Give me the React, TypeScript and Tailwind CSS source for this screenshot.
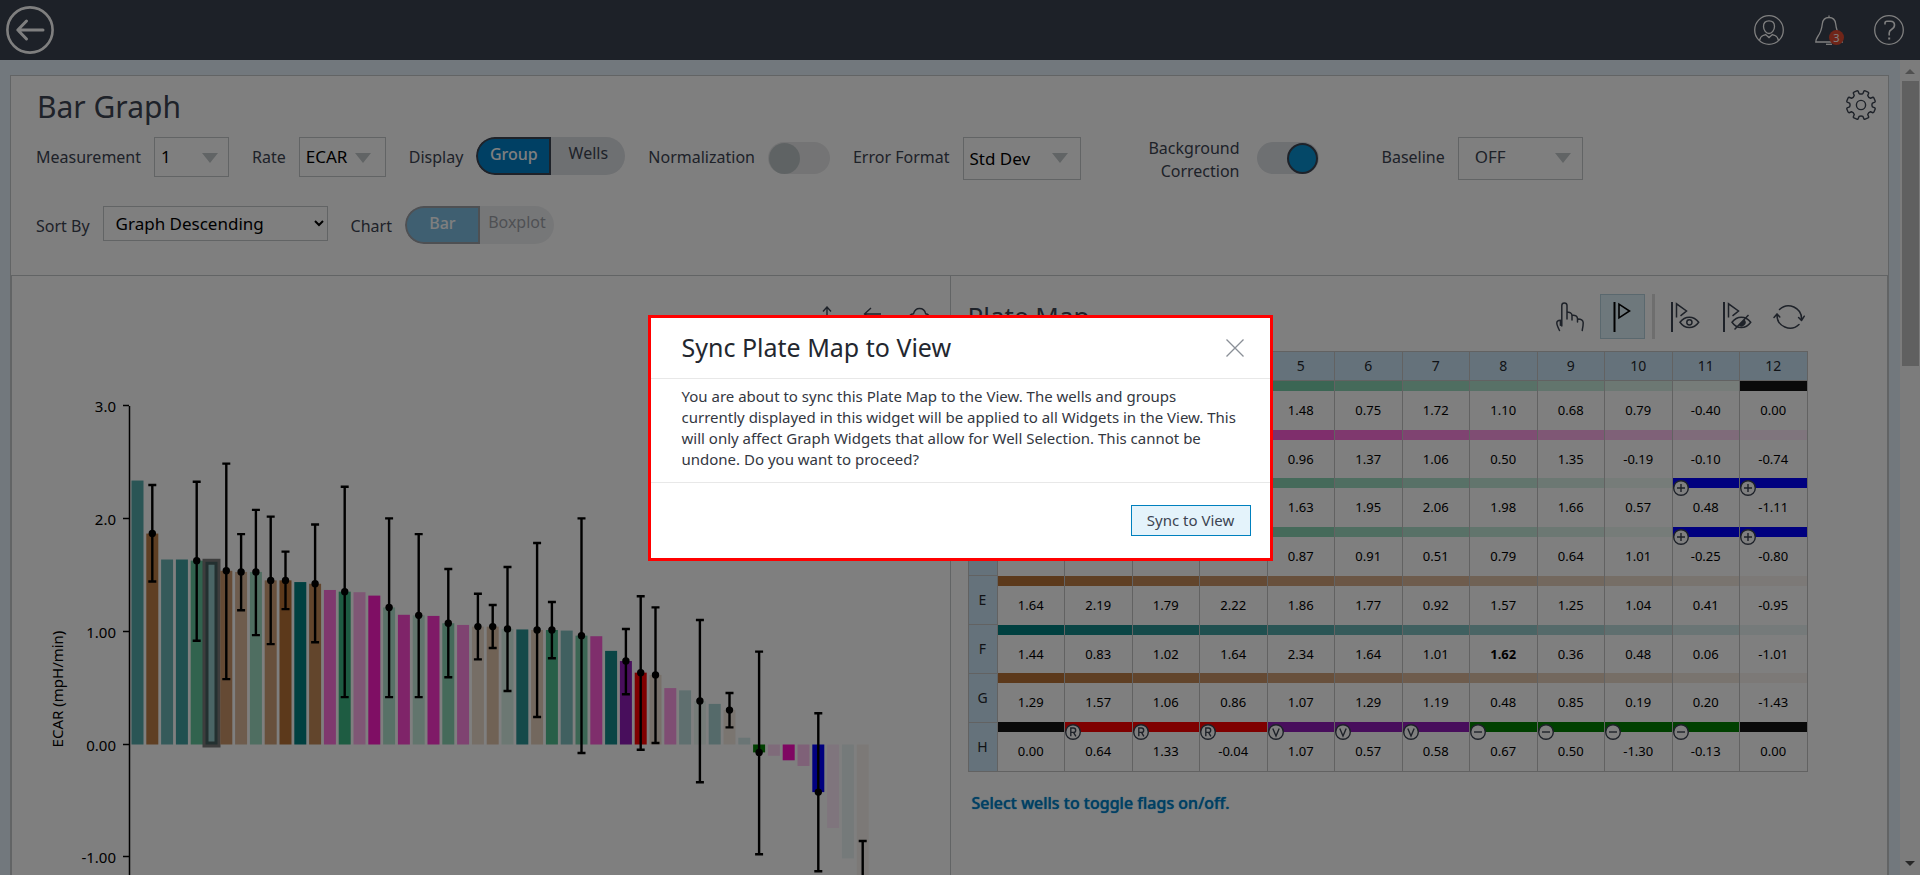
import React from "react";

type Rgb = [number, number, number];

const FAMILY: Record<string, Rgb> = {
  green: [60, 184, 132],
  magenta: [254, 12, 196],
  brown: [184, 114, 54],
  teal: [0, 128, 128],
  red: [255, 0, 0],
  purple: [144, 28, 184],
  forest: [0, 128, 0],
  blue: [0, 0, 255],
  black: [20, 20, 20],
};

const shade = (name: string, alpha: number) => {
  const [r, g, b] = FAMILY[name];
  const mix = (c: number) => Math.round(c * alpha + 255 * (1 - alpha));
  return `rgb(${mix(r)}, ${mix(g)}, ${mix(b)})`;
};

/* ---------- Icons ---------- */

const BackIcon = () => (
  <svg width="50" height="50" viewBox="0 0 50 50" fill="none" stroke="#fff" strokeWidth="2.6" strokeLinecap="round" strokeLinejoin="round" aria-hidden="true">
    <circle cx="25" cy="25" r="22.6" />
    <path d="M38 25H13M21.500 16L12.800 25l8.700 9" strokeWidth="3" />
  </svg>
);

const UserIcon = () => (
  <svg width="30" height="30" viewBox="0 0 30 30" fill="none" stroke="#fff" strokeWidth="1.3" aria-hidden="true">
    <circle cx="15" cy="15" r="14.3" />
    <path d="M15 5.800c3.400 0 5.500 2.400 5.500 5.700 0 3.500-2.700 7-5.500 7s-5.500-3.500-5.500-7c0-3.300 2.100-5.700 5.500-5.700z" />
    <path d="M5.500 25.500c.6-2.600 1.600-4.300 3.500-5 1.100-.4 2-.5 2.600-.9L15 22.600l3.400-3c.6.4 1.500.5 2.600.9 1.900.7 2.900 2.400 3.500 5" />
  </svg>
);

const BellIcon = () => (
  <svg width="30" height="30" viewBox="0 0 30 30" fill="none" stroke="#fff" strokeWidth="1.3" aria-hidden="true">
    <path d="M15 .5v2M15 2.500c-4.500 0-6.300 3-6.700 6.500-.6 5.500-1.600 8.500-4.500 12.500-1.400 2-2 3.500-2 5.500h26.400c0-2-.6-3.500-2-5.500-2.900-4-3.900-7-4.500-12.500-.4-3.500-2.200-6.500-6.700-6.500z" />
    <path d="M12 29.300h6" />
  </svg>
);

const HelpIcon = () => (
  <svg width="30" height="30" viewBox="0 0 30 30" fill="none" stroke="#fff" strokeWidth="1.3" aria-hidden="true">
    <circle cx="15" cy="15" r="14.300" />
    <path d="M11 9.500V8c0-1.200.8-1.700 2-1.700h3.500c2.400 0 4 1.400 4 3.700 0 2.200-1.300 3.500-3 4.500-1.600.9-2.300 1.600-2.300 3.500v2.500" strokeWidth="1.600" />
    <path d="M15.200 22.500v2" strokeWidth="2" />
  </svg>
);

const gearPath = () => {
  const pts: string[] = [];
  for (let i = 0; i < 8; i++) {
    const c = 22.5 + i * 45;
    const at = (deg: number, r: number) => {
      const a = (deg * Math.PI) / 180;
      return `${(15 + r * Math.cos(a)).toFixed(2)} ${(15 + r * Math.sin(a)).toFixed(2)}`;
    };
    pts.push(`${i === 0 ? "M" : "L"}${at(c - 13, 11.6)}`);
    pts.push(`L${at(c - 10.5, 14.2)}Q${at(c - 9, 14.8)} ${at(c - 6, 14.7)}`);
    pts.push(`L${at(c + 6, 14.7)}Q${at(c + 9, 14.8)} ${at(c + 10.5, 14.2)}`);
    pts.push(`L${at(c + 13, 11.6)}Q${at(c + 22.5, 10.4)} ${at(c + 32, 11.6)}`);
  }
  return pts.join("") + "Z";
};

const GearIcon = () => (
  <svg width="30" height="30" viewBox="0 0 30 30" fill="none" stroke="#3c4452" strokeWidth="1.4" strokeLinejoin="round" aria-hidden="true">
    <path d={gearPath()} />
    <circle cx="15" cy="15" r="4.600" />
  </svg>
);

const HandIcon = () => (
  <svg width="30" height="30" viewBox="0 0 30 30" fill="none" stroke="#3c4452" strokeWidth="1.5" strokeLinecap="round" strokeLinejoin="round" aria-hidden="true">
    <path d="M4.500 28.500c-1-2-2.700-6-2.700-7.500 0-2 1.300-2.800 3.600-2.800v5M6.800 24V3.600C6.800 2 7.600 1 9.300 1s2.700 1 2.700 2.600V17M12 10.500c2.800-.5 5 .3 5 3.200V18M17 13.300c3.300-.4 5.500.7 5.500 3.500V20M22.500 17c3.500-.2 5.700 1 5.700 3.800 0 3-.5 5-1 7.700" />
  </svg>
);

const FlagIcon = () => (
  <svg width="30" height="30" viewBox="0 0 30 30" fill="none" stroke="#000" strokeWidth="1.600" aria-hidden="true">
    <path d="M7.500 0v30" strokeWidth="2" />
    <path d="M12 2.200v13.600L22.500 9z" />
  </svg>
);

const FlagEyeIcon = ({ hidden = false }: { hidden?: boolean }) => (
  <svg width="30" height="30" viewBox="0 0 30 30" fill="none" stroke="#3c4452" strokeWidth="1.500" aria-hidden="true">
    <path d="M2 0v30" strokeWidth="2" />
    <path d="M6.500 15.500V1.800L16.500 9l-6 4.800" />
    <path d="M10 20.300c2.500-3.300 5.700-5 9.300-5s6.900 1.700 9.400 5c-2.500 3.600-5.800 5.300-9.400 5.300s-6.800-1.700-9.300-5.300z" />
    {hidden ? (
      <>
        <path d="M26.500 13L12.500 27.500" />
        <path d="M22.500 17.500a4 4 0 0 1-6 5.600z" fill="#3c4452" stroke="none" />
      </>
    ) : (
      <circle cx="19.400" cy="20.300" r="2.600" />
    )}
  </svg>
);

const SyncIcon = () => (
  <svg width="32" height="30" viewBox="0 0 32 30" fill="none" stroke="#3c4452" strokeWidth="1.500" strokeLinecap="round" strokeLinejoin="round" aria-hidden="true">
    <path d="M6.500 7.500a13 13 0 0 1 22 10M25.600 15.500l2.900 3 2.800-4.300" />
    <path d="M26 22.500a13 13 0 0 1-22-9.500M1 15.500l3-3.600 2.800 3" />
  </svg>
);

const CloseIcon = () => (
  <svg width="18" height="18" viewBox="0 0 18 18" fill="none" stroke="#8a8f97" strokeWidth="1.300" aria-hidden="true">
    <path d="M.5.5l17 17M17.500.500l-17 17" />
  </svg>
);

const ChartTools = () => (
  <div className="flex h-6 justify-end gap-6 pr-[19px]">
    <button aria-label="Export">
      <svg width="24" height="24" viewBox="0 0 24 24" fill="none" stroke="#3c4452" strokeWidth="1.400" aria-hidden="true">
        <path d="M12 1v22M8 5.500L12 1l4 4.500" />
      </svg>
    </button>
    <button aria-label="Undo">
      <svg width="20" height="24" viewBox="0 0 20 24" fill="none" stroke="#3c4452" strokeWidth="1.400" aria-hidden="true">
        <path d="M8 2L1.500 8 8 14M1.500 8H18" />
      </svg>
    </button>
    <button aria-label="Save to cloud">
      <svg width="24" height="24" viewBox="0 0 24 24" fill="none" stroke="#3c4452" strokeWidth="1.400" aria-hidden="true">
        <path d="M7 17H5a4 4 0 0 1-3-4c0-3 1.500-5 4.500-5.200C7.500 4 10 2.500 12.500 2.500c3.500 0 5.500 2 6.200 5.300 2.500.4 3.800 2.200 3.800 4.700a4 4 0 0 1-3.500 4.500h-2" />
      </svg>
    </button>
  </div>
);

/* ---------- Form controls ---------- */

const Label = ({ htmlFor, children }: { htmlFor: string; children: React.ReactNode }) => (
  <label htmlFor={htmlFor} className="h-10 text-base leading-10 text-[#3c4452]">
    {children}
  </label>
);

const Dropdown = ({ id, value, className, arrow = "right-[11px]" }: { id: string; value: string; className: string; arrow?: string }) => (
  <div className="relative">
    <select id={id} className={`appearance-none rounded-none border border-[#c4c8ca] bg-transparent text-[17px] ${className}`}>
      <option>{value}</option>
    </select>
    <svg width="16" height="10" viewBox="0 0 16 10" className={`pointer-events-none absolute top-4 ${arrow}`} aria-hidden="true">
      <path d="M0 0h16L8 10z" fill="#c2c8ca" />
    </svg>
  </div>
);

const Segmented = ({ id, options, disabled = false }: { id: string; options: [string, string]; disabled?: boolean }) => (
  <div id={id} role="group" className={`flex h-[38px] w-[149px] overflow-hidden rounded-full bg-[#dde0e4] text-base ${disabled ? "opacity-50" : ""}`}>
    <button disabled={disabled} className="w-[75px] rounded-l-full border-2 border-[#3c4452] bg-[#0080c8] pb-1 font-medium text-white">
      {options[0]}
    </button>
    <button disabled={disabled} className="w-[74px] pb-1.5 text-[#3c4452]">
      {options[1]}
    </button>
  </div>
);

const Switch = ({ id, on = false }: { id: string; on?: boolean }) => (
  <input
    id={id}
    type="checkbox"
    role="switch"
    defaultChecked={on}
    className="mt-[5px] flex h-8 w-[62px] appearance-none items-center rounded-full bg-[#e9e9ea] px-px before:size-[31px] before:rounded-full before:bg-[#bfc7c9] checked:justify-end checked:bg-[#dde0e4] checked:before:border-2 checked:before:border-[#3c4452] checked:before:bg-[#0890d0]"
  />
);

/* ---------- Bar graph ---------- */

type Bar = { v: number; f: string; a: number; hi?: number; lo?: number; sel?: boolean };

const bars: Bar[] = [
  { v: 2.34, f: "teal", a: 0.667 },
  { v: 1.87, f: "brown", a: 0.917, hi: 2.3, lo: 1.445 },
  { v: 1.64, f: "teal", a: 0.583 },
  { v: 1.64, f: "teal", a: 0.75 },
  { v: 1.63, f: "green", a: 0.8, hi: 2.33, lo: 0.92 },
  { v: 1.62, f: "teal", a: 0.417, sel: true },
  { v: 1.54, f: "brown", a: 0.75, hi: 2.49, lo: 0.58 },
  { v: 1.53, f: "brown", a: 0.5, hi: 1.865, lo: 1.19 },
  { v: 1.53, f: "green", a: 0.5, hi: 2.08, lo: 0.97 },
  { v: 1.455, f: "brown", a: 0.667, hi: 2.02, lo: 0.89 },
  { v: 1.455, f: "brown", a: 1, hi: 1.71, lo: 1.2 },
  { v: 1.44, f: "teal", a: 1 },
  { v: 1.425, f: "brown", a: 0.833, hi: 1.95, lo: 0.906 },
  { v: 1.37, f: "magenta", a: 0.583 },
  { v: 1.355, f: "green", a: 1, hi: 2.285, lo: 0.42 },
  { v: 1.35, f: "magenta", a: 0.333 },
  { v: 1.32, f: "magenta", a: 0.93 },
  { v: 1.215, f: "green", a: 0.4, hi: 2.005, lo: 0.42 },
  { v: 1.15, f: "magenta", a: 0.75 },
  { v: 1.145, f: "green", a: 0.3, hi: 1.865, lo: 0.42 },
  { v: 1.14, f: "magenta", a: 0.833 },
  { v: 1.075, f: "green", a: 0.6, hi: 1.556, lo: 0.596 },
  { v: 1.06, f: "magenta", a: 0.5 },
  { v: 1.045, f: "brown", a: 0.25, hi: 1.337, lo: 0.755 },
  { v: 1.045, f: "brown", a: 0.417, hi: 1.237, lo: 0.855 },
  { v: 1.025, f: "green", a: 0.2, hi: 1.574, lo: 0.474 },
  { v: 1.02, f: "teal", a: 0.833 },
  { v: 1.015, f: "brown", a: 0.333, hi: 1.786, lo: 0.244 },
  { v: 1.015, f: "green", a: 0.9, hi: 1.263, lo: 0.764 },
  { v: 1.01, f: "teal", a: 0.5 },
  { v: 0.965, f: "green", a: 0.7, hi: 2.005, lo: -0.075 },
  { v: 0.96, f: "magenta", a: 0.667 },
  { v: 0.83, f: "teal", a: 0.917 },
  { v: 0.74, f: "purple", a: 1, hi: 1.024, lo: 0.445 },
  { v: 0.637, f: "red", a: 1, hi: 1.314, lo: -0.046 },
  { v: 0.617, f: "brown", a: 0.22, hi: 1.216, lo: 0.013 },
  { v: 0.5, f: "magenta", a: 0.417 },
  { v: 0.48, f: "teal", a: 0.25 },
  { v: 0.385, f: "green", a: 0.1, hi: 1.104, lo: -0.335 },
  { v: 0.36, f: "teal", a: 0.333 },
  { v: 0.305, f: "brown", a: 0.15, hi: 0.457, lo: 0.152 },
  { v: 0.06, f: "teal", a: 0.167 },
  { v: -0.07, f: "forest", a: 1, hi: 0.823, lo: -0.973 },
  { v: -0.1, f: "magenta", a: 0.167 },
  { v: -0.14, f: "magenta", a: 1 },
  { v: -0.19, f: "magenta", a: 0.25 },
  { v: -0.422, f: "blue", a: 1, hi: 0.277, lo: -1.124 },
  { v: -0.74, f: "magenta", a: 0.083 },
  { v: -1.01, f: "teal", a: 0.083 },
  { v: -1.19, f: "brown", a: 0.083, hi: -0.855, lo: -1.52 },
];

const ticks: [number, string][] = [
  [3, "3.0"],
  [2, "2.0"],
  [1, "1.00"],
  [0, "0.00"],
  [-1, "-1.00"],
];

const UNIT = 112.8;
const ZERO = 414.5;
const AXIS_X = 117;
const yOf = (v: number) => ZERO - v * UNIT;

const BarChart = () => (
  <svg width="900" height="640" viewBox="0 0 900 640" role="img" aria-label="ECAR bar graph" className="block">
    <g fontFamily="'Noto Sans', sans-serif" fontSize="15" fill="#000">
      {ticks.map(([v, t]) => (
        <g key={t}>
          <text x="104" y={yOf(v) + 6} textAnchor="end">
            {t}
          </text>
          <path d={`M111 ${Math.round(yOf(v)) - 0.5}H${AXIS_X}`} stroke="#000" strokeWidth="1.500" />
        </g>
      ))}
      <text transform="translate(51 359) rotate(-90)" textAnchor="middle" fontSize="15">
        ECAR (mpH/min)
      </text>
    </g>
    <path d={`M${AXIS_X + 0.5} 76V640`} stroke="#000" strokeWidth="1.500" />
    {bars.map((b, i) => {
      const x = 119.5 + i * 14.8;
      return (
        <rect
          key={i}
          x={x}
          y={Math.min(yOf(b.v), ZERO)}
          width="12"
          height={Math.abs(b.v) * UNIT}
          fill={shade(b.f, b.a)}
          stroke={b.sel ? "#000" : "none"}
          strokeWidth={b.sel ? 6 : 0}
          strokeOpacity="0.52"
        />
      );
    })}
    {bars.map((b, i) => {
      if (b.hi === undefined || b.lo === undefined) return null;
      const x = 125.5 + i * 14.8;
      return (
        <g key={i} stroke="#000" strokeWidth="2.400">
          <path d={`M${x} ${yOf(b.hi)}V${yOf(b.lo)}M${x - 4} ${yOf(b.hi)}h8M${x - 4} ${yOf(b.lo)}h8`} />
          <circle cx={x} cy={yOf(b.v)} r="3.700" stroke="none" />
        </g>
      );
    })}
  </svg>
);

/* ---------- Plate map ---------- */

const values: Record<string, string[]> = {
  A: ["", "", "", "", "1.48", "0.75", "1.72", "1.10", "0.68", "0.79", "-0.40", "0.00"],
  B: ["", "", "", "", "0.96", "1.37", "1.06", "0.50", "1.35", "-0.19", "-0.10", "-0.74"],
  C: ["", "", "", "", "1.63", "1.95", "2.06", "1.98", "1.66", "0.57", "0.48", "-1.11"],
  D: ["", "", "", "", "0.87", "0.91", "0.51", "0.79", "0.64", "1.01", "-0.25", "-0.80"],
  E: ["1.64", "2.19", "1.79", "2.22", "1.86", "1.77", "0.92", "1.57", "1.25", "1.04", "0.41", "-0.95"],
  F: ["1.44", "0.83", "1.02", "1.64", "2.34", "1.64", "1.01", "1.62", "0.36", "0.48", "0.06", "-1.01"],
  G: ["1.29", "1.57", "1.06", "0.86", "1.07", "1.29", "1.19", "0.48", "0.85", "0.19", "0.20", "-1.43"],
  H: ["0.00", "0.64", "1.33", "-0.04", "1.07", "0.57", "0.58", "0.67", "0.50", "-1.30", "-0.13", "0.00"],
};

const wellColor = (row: string, c: number): string => {
  const ramp12 = 1 - c / 12;
  switch (row) {
    case "A":
      return c === 0 || c === 11 ? shade("black", 1) : shade("green", 1 - (c - 1) / 10);
    case "B":
      return shade("magenta", ramp12);
    case "C":
    case "D":
      return c > 9 ? shade("blue", 1) : shade("green", 1 - c / 10);
    case "F":
      return shade("teal", ramp12);
    case "H":
      if (c === 0 || c === 11) return shade("black", 1);
      return shade(c < 4 ? "red" : c < 7 ? "purple" : "forest", 1);
    default:
      return shade("brown", ramp12);
  }
};

const flagPath = (row: string, c: number): string | null => {
  if ((row === "C" || row === "D") && c > 9) return "M4 8h8M8 4v8";
  if (row !== "H" || c === 0 || c === 11) return null;
  if (c < 4) return "M5.800 12.300V4h2.700a2.200 2.200 0 0 1 0 4.400H5.800M8.500 8.400l2.400 3.900";
  if (c < 7) return "M4.800 4.500L8 12l3.200-7.500";
  return "M4 8h8";
};

const WellFlag = ({ d }: { d: string }) => (
  <svg width="16" height="16" viewBox="0 0 16 16" className="absolute top-[2px] left-0" fill="none" stroke="#3c4452" strokeWidth="1.400" aria-hidden="true">
    <circle cx="8" cy="8" r="7.300" fill="#fff" />
    <path d={d} />
  </svg>
);

const PlateTable = () => (
  <table className="h-[421px] w-full table-fixed border-collapse border border-[#c4c4c4] text-center">
    <thead>
      <tr className="h-[29px] bg-[#cae4f6] text-sm text-[#23272f]">
        <th className="w-[29px] border border-[#c4c4c4] p-0" aria-label="Row" />
        {values.A.map((_, c) => (
          <th key={c} className="border border-[#c4c4c4] p-0 font-normal">
            {c + 1}
          </th>
        ))}
      </tr>
    </thead>
    <tbody>
      {Object.keys(values).map((row) => (
        <tr key={row}>
          <th className="border border-[#c4c4c4] bg-[#cae4f6] p-0 text-sm font-normal text-[#23272f]">{row}</th>
          {values[row].map((v, c) => {
            const flag = flagPath(row, c);
            return (
              <td key={c} className="relative border-x border-[#c4c4c4] p-0 align-top">
                <div className="h-[10px]" style={{ backgroundColor: wellColor(row, c) }} />
                {flag && <WellFlag d={flag} />}
                <div className={`h-[38px] text-[13px] leading-[38px] text-black ${row === "F" && c === 7 ? "font-bold" : ""}`}>{v}</div>
              </td>
            );
          })}
        </tr>
      ))}
    </tbody>
  </table>
);

const PlateMap = () => (
  <section className="border-l border-[#c4c8ca] pt-[18px] pl-[17px]">
    <div className="w-[840px] max-w-full">
      <div className="mb-3 flex h-[45px] items-center pr-[3px]">
        <h2 className="mr-auto text-[26px] text-[#3c4452]">Plate Map</h2>
        <button aria-label="Select wells" className="mr-[15px]">
          <HandIcon />
        </button>
        <button aria-label="Flag wells" className="flex size-[45px] items-center justify-center border border-[#b4d0dc] bg-[#dcf0f8]">
          <FlagIcon />
        </button>
        <span className="mx-[7px] h-full w-[3px] bg-[#dcdcdc]" />
        <button aria-label="Show flags" className="ml-2">
          <FlagEyeIcon />
        </button>
        <button aria-label="Hide flags" className="ml-[22px]">
          <FlagEyeIcon hidden />
        </button>
        <button aria-label="Sync to view" className="ml-[21px]">
          <SyncIcon />
        </button>
      </div>
      <PlateTable />
      <p className="mt-[19px] pl-1 text-base font-medium text-[#0080c8] [text-shadow:0_0_1px_#0080c8]">Select wells to toggle flags on/off.</p>
    </div>
  </section>
);

/* ---------- Page ---------- */

const TopBar = () => (
  <header className="flex h-[60px] shrink-0 items-center bg-[#3a4250] pr-4 pl-[5px]">
    <button aria-label="Back" className="mr-auto">
      <BackIcon />
    </button>
    <div className="flex gap-[30px]">
      <button aria-label="Account">
        <UserIcon />
      </button>
      <button aria-label="Notifications" className="relative">
        <BellIcon />
        <span className="absolute right-0 bottom-0 size-[15px] rounded-full bg-[#e04a30] text-center text-[11px] leading-[15px] text-white">3</span>
      </button>
      <button aria-label="Help">
        <HelpIcon />
      </button>
    </div>
  </header>
);

const Controls = () => (
  <section className="pb-[29px] pl-[25px]">
    <div className="flex h-[61px] items-center justify-between pr-3">
      <h1 className="pl-px text-[30px] leading-[61px] text-[#3c4452]">Bar Graph</h1>
      <button aria-label="Widget settings" className="mb-1">
        <GearIcon />
      </button>
    </div>
    <div className="flex items-start gap-[23px]">
      <div className="flex gap-[13px]">
        <Label htmlFor="measurement">Measurement</Label>
        <Dropdown id="measurement" value="1" className="h-10 w-[75px] pl-1.5 text-black" />
      </div>
      <div className="flex gap-[13px]">
        <Label htmlFor="rate">Rate</Label>
        <Dropdown id="rate" value="ECAR" className="h-10 w-[87px] pl-1.5 text-black" arrow="right-[15px]" />
      </div>
      <div className="flex gap-[13px]">
        <Label htmlFor="display">Display</Label>
        <Segmented id="display" options={["Group", "Wells"]} />
      </div>
      <div className="flex gap-[13px]">
        <Label htmlFor="normalization">Normalization</Label>
        <Switch id="normalization" />
      </div>
      <div className="flex gap-[13px]">
        <Label htmlFor="error-format">Error Format</Label>
        <Dropdown id="error-format" value="Std Dev" className="h-[43px] w-[118px] pl-1.5 text-black" arrow="right-[13px]" />
      </div>
      <div className="flex gap-[17px]">
        <label htmlFor="background" className="w-[136px] pl-10 text-right text-base leading-[23px] text-[#3c4452]">
          Background Correction
        </label>
        <Switch id="background" on />
      </div>
      <div className="ml-10 flex gap-[13px]">
        <Label htmlFor="baseline">Baseline</Label>
        <Dropdown id="baseline" value="OFF" className="h-[43px] w-[125px] pb-1 pl-4 text-[#3c4452]" arrow="right-3" />
      </div>
    </div>
    <div className="mt-[23px] flex items-start gap-[23px]">
      <div className="flex gap-[13px]">
        <Label htmlFor="sort-by">Sort By</Label>
        <select id="sort-by" className="h-[35px] w-[225px] rounded-none border border-[#c4c8ca] bg-transparent pl-2 text-[17px] text-black">
          <option>Graph Descending</option>
        </select>
      </div>
      <div className="flex gap-[13px]">
        <Label htmlFor="chart">Chart</Label>
        <Segmented id="chart" options={["Bar", "Boxplot"]} disabled />
      </div>
    </div>
  </section>
);

const SyncDialog = () => (
  <div className="absolute inset-0 flex items-center justify-center bg-black/50">
    <div role="dialog" aria-modal="true" aria-labelledby="sync-title" className="w-[625px] border-[3px] border-[#ff0000] bg-white">
      <div className="flex h-[61px] items-center justify-between border-b border-[#e8e8e8] pr-[26px] pl-[31px]">
        <h2 id="sync-title" className="text-[25px] text-[#23272f]">
          Sync Plate Map to View
        </h2>
        <button aria-label="Close">
          <CloseIcon />
        </button>
      </div>
      <p className="border-b border-[#e8e8e8] pt-[7px] pr-[30px] pb-3 pl-[31px] text-[15px] leading-[21px] text-[#33373f]">
        You are about to sync this Plate Map to the View. The wells and groups currently displayed in this widget will be applied to all Widgets in the View. This will only affect Graph Widgets that allow for Well Selection. This cannot be undone. Do you want to proceed?
      </p>
      <div className="flex h-[75px] items-center justify-end pr-[19px]">
        <button className="h-[31px] w-[120px] border border-[#0080be] bg-[#e4f3fb] text-[15px] text-[#3c4452]">Sync to View</button>
      </div>
    </div>
  </div>
);

export default function App() {
  return (
    <div className="relative flex h-screen flex-col overflow-hidden bg-[#e4f0fa] font-['Noto_Sans',sans-serif]">
      <TopBar />
      <div className="flex min-h-0 flex-1">
        <main className="min-w-0 flex-1 overflow-hidden pt-[15px] pr-[11px] pl-[10px]">
          <div className="border border-[#c4c8ca] bg-white">
            <Controls />
            <div className="grid grid-cols-2 border-t border-r border-l border-[#c4c8ca]">
              <section className="overflow-hidden pt-[30px]">
                <ChartTools />
                <BarChart />
              </section>
              <PlateMap />
            </div>
          </div>
        </main>
        <div className="flex w-5 flex-col items-center bg-[#f8f8f8]" aria-hidden="true">
          <svg width="10" height="5" viewBox="0 0 10 5" className="mt-[9px] mb-[7px]">
            <path d="M0 5l5-5 5 5z" fill="#a0a0a0" />
          </svg>
          <div className="h-[285px] w-[17px] bg-[#c1c1c1]" />
          <svg width="10" height="5" viewBox="0 0 10 5" className="mt-auto mb-[9px]">
            <path d="M0 0l5 5 5-5z" fill="#505050" />
          </svg>
        </div>
      </div>
      <SyncDialog />
    </div>
  );
}
